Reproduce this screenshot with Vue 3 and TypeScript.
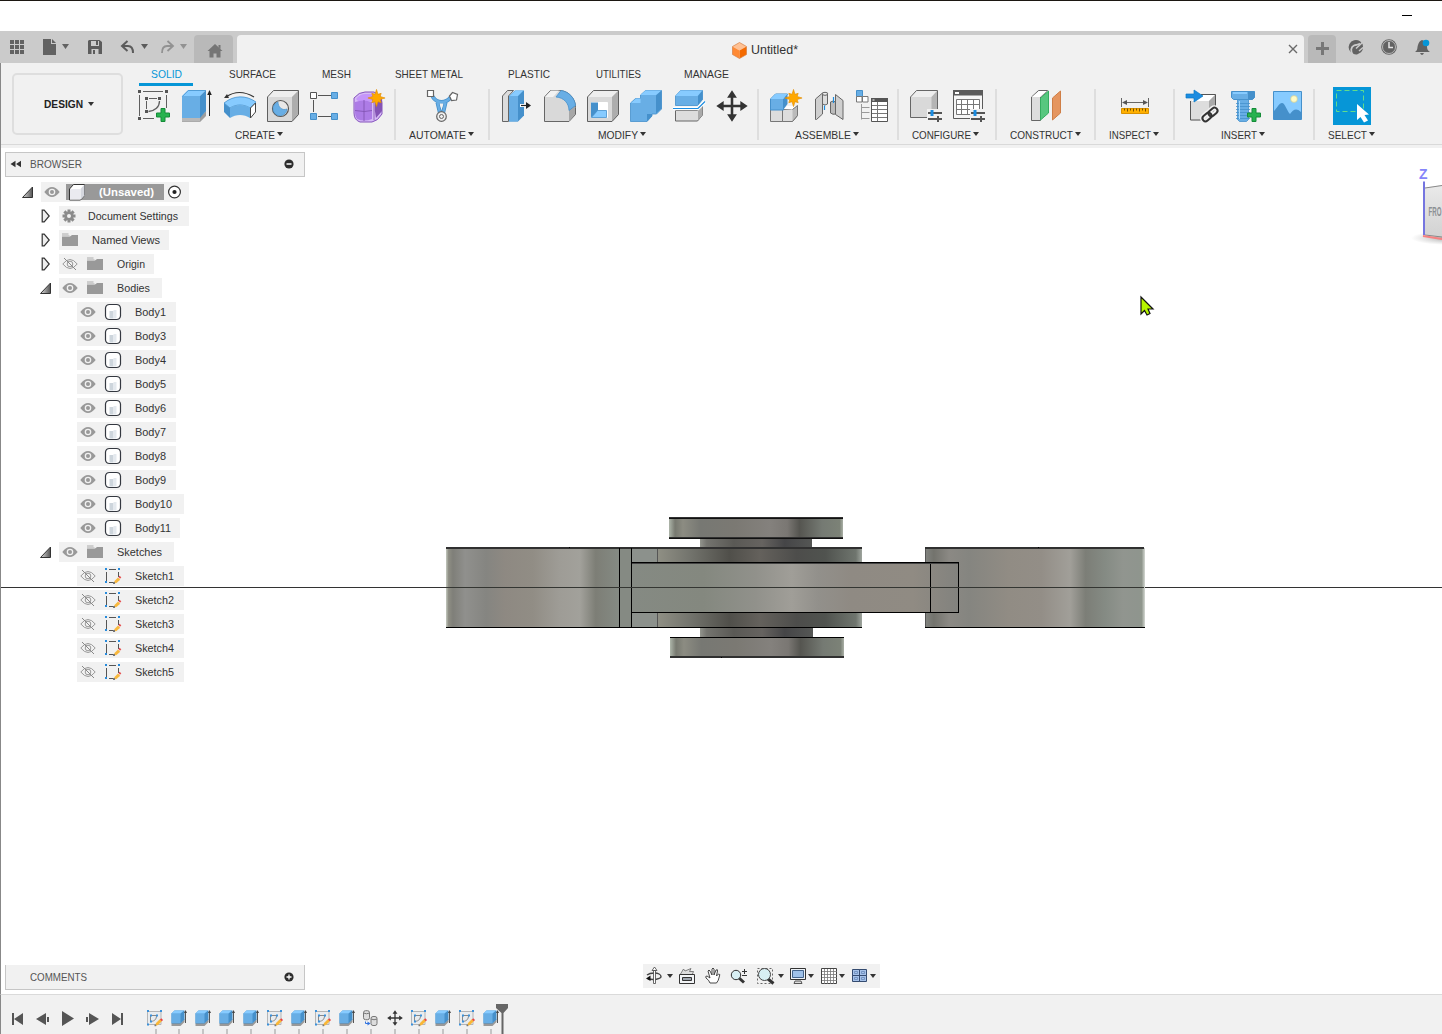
<script setup lang="ts">
import type { Directive } from 'vue'

/* Condenses or widens a label horizontally so it takes exactly the given width. */
const vFit: Directive<HTMLElement, number> = {
  mounted(el, { value }) {
    const natural = el.getBoundingClientRect().width
    el.style.width = `${value}px`
    el.style.transform = `scaleX(${value / natural})`
  },
}

interface Icon { x: number; w: number; art: string }
/* w: group width, tw: label width, lx: label indent, pad: icon row indent */
interface Group { label: string; w: number; tw: number; lx: number; pad: number; icons: Icon[] }

const G = '#5f5f5f'
const star = (x: number, y: number) => {
  let d = ''
  for (let i = 0; i < 16; i++) {
    const r = i % 2 ? 4 : i % 4 ? 6.6 : 8.6
    const a = (i * Math.PI) / 8
    d += `${i ? 'L' : 'M'}${(x + r * Math.sin(a)).toFixed(1)} ${(y - r * Math.cos(a)).toFixed(1)}`
  }
  return `<path d="${d}Z" fill="#ffa800" stroke="#e08c00" stroke-width=".6"/>`
}
const plus = (x: number, y: number) =>
  `<path d="M${x - 2} ${y - 6.5}h4v4.5h4.5v4h-4.5v4.5h-4v-4.5h-4.500v-4h4.500z" fill="#27b24e" stroke="#158c38" stroke-width="1"/>`
const sliders = (x: number, y: number) =>
  `<path d="M${x - 1} ${y - 4}h15v14h-15z" fill="#f1f1f1"/><path d="M${x} ${y}h14M${x} ${y + 6}h14" stroke="#555" stroke-width="2"/><path d="M${x + 10} ${y + 3}v6" stroke="#555" stroke-width="2"/><path d="M${x + 4} ${y - 3}v6" stroke="#1b8ce0" stroke-width="3"/>`
const moveCross = (x: number, y: number, s: number) =>
  `<g transform="translate(${x} ${y}) scale(${s})" fill="#333"><path d="M-1.3-10h2.600v20h-2.600zM-10-1.300h20v2.600h-20z"/><path d="M0-16l5 7.500H-5zM0 16l5-7.500H-5zM-16 0l7.500-5V5zM16 0l-7.500-5V5z"/></g>`

const groups: Group[] = [
  {
    label: 'CREATE', w: 272, tw: 40, lx: 112, pad: 7,
    icons: [
      { x: 130, w: 43, art: `<g fill="none" stroke="${G}"><path d="M143 91.500h20M139.500 95v21M166.500 95v13M143 118.500h11M146.500 101v8M149 98.500h8"/><path d="M159.500 101c0 6-4.500 10-11 10.500" stroke-width="1.300"/></g><path d="M138 90h3v3h-3zM165 90h3v3h-3zM138 117h3v3h-3zM145 97h3v3h-3zM158 97h3v3h-3zM145 110h3v3h-3z" fill="#555"/>${plus(163, 115)}` },
      { x: 173, w: 43, art: `<path d="M182 117h18l6-6v5l-6 6h-18z" fill="#9d9d9d"/><path d="M182 117h18v4.500h-18z" fill="#b8b8b8"/><path d="M182 96l6-6h18l-6 6z" fill="#87cbff"/><path d="M182 96h18v22h-18z" fill="#68aee5"/><path d="M200 96l6-6v21l-6 7z" fill="#4590cb"/><path d="M182.500 96.300l5.800-5.800h17.200v21" fill="none" stroke="#4590cb" stroke-width=".8"/><path d="M209.500 116V94" stroke="#222"/><path d="M209.500 90l2.300 5h-4.600z" fill="#222"/>` },
      { x: 216, w: 43, art: `<path d="M226 97q13-9 28 0" fill="none" stroke="#333" stroke-width="1.200"/><path d="M224 98l3-4 2 4z" fill="#333"/><path d="M224 103c10-8 22-8 32-1l-6 6c-6-4-14-4-20 0z" fill="#87cbff" stroke="#4590cb" stroke-width=".8"/><path d="M230 108c6-4 14-4 20 0v10c-6-4-14-4-20 0z" fill="#68aee5"/><path d="M224 103l6 5v10l-6-6z" fill="#4590cb"/><path d="M250.500 108l5-5v9l-5 6z" fill="#fff" stroke="#444"/>` },
      { x: 259, w: 43, art: `<path d="M267.500 97l6-6.500h25v24l-6.500 7h-24.500z" fill="#d9d9d9"/><path d="M267.500 97l6-6.500h25l-6.500 6.500z" fill="#eee"/><path d="M292 97l6.500-6.500v24l-6.500 7z" fill="#adadad"/><path d="M267.500 97l6-6.500h25v24l-6.500 7h-24.500z" fill="none" stroke="${G}" stroke-linejoin="round"/><circle cx="280.500" cy="108.500" r="8" fill="#e8e8e8" stroke="#555" stroke-width="1.200"/><path d="M278 102a7 7 0 1 0 9 7c-5 2-9-2-9-7z" fill="#68aee5" stroke="#4590cb" stroke-width=".7"/>` },
      { x: 302, w: 43, art: `<path d="M318 95.500h13M313.500 100v12M318 116.500h13" stroke="#555" fill="none"/><path d="M310.500 92.500h6v6h-6z" fill="#fff" stroke="#555"/><path d="M331.500 92.500h6v6h-6zM310.500 113.500h6v6h-6zM331.500 113.500h6v6h-6z" fill="#68aee5" stroke="#4590cb"/>` },
      { x: 345, w: 45, art: `<path d="M354 98q5-6 11-6h9q8 4 8 11v11q-4 7-10 8h-12q-6-2-6-9z" fill="#d6bbf6" stroke="#8552bd"/><path d="M356 99q4-5 9-5h7l2 7h-16z" fill="#c596fa"/><path d="M355 102q8-3 17 0v17q-8 3-15 0-2-3-2-6z" fill="#ad7ce6"/><path d="M375 103l7-4v12l-6 7q-2-8-1-15z" fill="#8454b5"/><path d="M364 100v21M355 110.500q10 2 17 0M374 102v18" stroke="#7e50af" stroke-width=".8" fill="none"/>${star(376.500, 98)}` },
    ],
  },
  {
    label: 'AUTOMATE', w: 94, tw: 57, lx: 14, pad: 25,
    icons: [
      { x: 420, w: 44, art: `<path d="M432.500 96.500q3.500 5.500 9 5.500t9-4.500M437.500 102.500l2.500 10.500M445.500 102.500l-2.500 10.500" fill="none" stroke="#4590cb" stroke-width="4"/><path d="M432.500 96.500q3.500 5.500 9 5.500t9-4.500M437.500 102.500l2.500 10.500M445.500 102.500l-2.500 10.500" fill="none" stroke="#68aee5" stroke-width="2.400"/><path d="M439.500 103.500h4l-2 6z" fill="#f1f1f1"/><circle cx="441.500" cy="116.500" r="4.800" fill="#eee" stroke="#666" stroke-width="1.200"/><circle cx="441.500" cy="116.500" r="2" fill="none" stroke="#666"/><path d="M427.500 90.500h6v6h-6zM449.500 96l3-3.500 5 2-1 5.500-5 .5z" fill="#fff" stroke="#666" stroke-width="1.200"/>` },
    ],
  },
  {
    label: 'MODIFY', w: 269, tw: 40, lx: 109, pad: 6,
    icons: [
      { x: 495, w: 43, art: `<path d="M502.500 96l5-5.500h6l-5 5.500v25.500h-6z" fill="#ddd" stroke="#666"/><path d="M509 96l6-5.500h9v25l-6 6h-9z" fill="#4590cb"/><path d="M509 96h9v25.500h-9z" fill="#68aee5"/><path d="M509.500 96l6-5.500h8l-5.500 5.500z" fill="#87cbff"/><path d="M520 105.500h9" stroke="#fff" stroke-width="3"/><path d="M521 105.500h6" stroke="#222" stroke-width="1.200"/><path d="M526 102l5 3.500-5 3.500z" fill="#222"/>` },
      { x: 538, w: 43, art: `<path d="M544.500 97l6-6.500h9c8 0 16 7 16 17v7l-6.500 7h-24.500z" fill="#d9d9d9" stroke="#666"/><path d="M545 97l6-6.500h8l-6 6.500z" fill="#f2f2f2"/><path d="M569 109l6-5v10.500l-6 6.500z" fill="#a7a7a7"/><path d="M556 97l5-6.500c8 1 14 8 14.500 15l-6.500 5c0-7-5-13-13-13.500z" fill="#68aee5" stroke="#4590cb" stroke-width=".8"/>` },
      { x: 581, w: 43, art: `<path d="M587.500 97l6-6.500h25v24l-6.500 7h-24.500z" fill="#d9d9d9"/><path d="M587.500 97l6-6.500h25l-6.500 6.500z" fill="#eee"/><path d="M612 97l6.500-6.500v24l-6.500 7z" fill="#adadad"/><path d="M587.500 97l6-6.500h25v24l-6.500 7h-24.500z" fill="none" stroke="${G}" stroke-linejoin="round"/><path d="M591.500 102.500h16v15h-16z" fill="#fff" stroke="#fff"/><path d="M591 102.500h7v9l-7 6z" fill="#4590cb"/><path d="M591.500 117.500l6-7h9v7z" fill="#87cbff" stroke="#4590cb" stroke-width=".8"/>` },
      { x: 624, w: 43, art: `<path d="M630.500 103l5-4.500h5V95l5-4.500h16v18.500l-5 5h-4.500v2l-5 5.500h-16.500z" fill="#68aee5" stroke="#4590cb" stroke-width=".8"/><path d="M640.500 95l5-4.500h16l-5.500 4.500zM631 103l5-4.500h4.500v4.500z" fill="#87cbff"/><path d="M656 95.500l5.500-5v18l-5.500 5zM647 114h5v2l-5 5.500z" fill="#4590cb"/>` },
      { x: 667, w: 43, art: `<path d="M675.500 110.500h22l5-4.500v9l-5 6h-22z" fill="#ddd" stroke="#666"/><path d="M698 110l4.500-4v9l-4.500 5.500z" fill="#aaa"/><path d="M675.500 96l5-5.500h22v9l-5 6h-22z" fill="#68aee5" stroke="#4590cb" stroke-width=".8"/><path d="M675.500 96l5-5.500h22l-5 5.500z" fill="#87cbff"/><path d="M698 96l4.500-5.500v9l-4.500 5.500z" fill="#4590cb"/><path d="M673 108.500h25l7-7" fill="none" stroke="#fff" stroke-width="3.500"/><path d="M673 108.500h25l7-7" fill="none" stroke="#1b8ce0" stroke-width="1.200"/>` },
      { x: 710, w: 43, art: moveCross(732, 106, 0.98) },
    ],
  },
  {
    label: 'ASSEMBLE', w: 140, tw: 56, lx: 37, pad: 5,
    icons: [
      { x: 763, w: 43, art: `<path d="M770.500 109.500h12v12h-12zM782.500 109.500h9l6-3v9l-5 6h-10z" fill="#ddd" stroke="#777"/><path d="M783 109l4-3h10.500l-5 3.500z" fill="#fff"/><path d="M792.500 109.500l5-4v10l-5 6" fill="#bbb" stroke="#777"/><path d="M770.500 99l5-5h12l-4 5v11h-13z" fill="#68aee5" stroke="#4590cb"/><path d="M770.500 99l5-5h12l-4 5z" fill="#87cbff"/><path d="M783.500 99l4-5v10l-4 5.500z" fill="#4590cb"/>${star(793.500, 98)}` },
      { x: 806, w: 43, art: `<path d="M815.500 99l7-6h5l-5 5v16l-6 5.500h-1z" fill="#cfcfcf" stroke="#666"/><path d="M822.500 94v10q2.500 2 5 0V94z" fill="#dedede" stroke="#666"/><ellipse cx="825" cy="93.800" rx="2.600" ry="1.500" fill="#eee" stroke="#666"/><path d="M835.500 94.500l7.500 6v19l-7.500-5z" fill="#cfcfcf" stroke="#666"/><path d="M830.500 102v11q2.500 2 5 1v-12q-2-2-5 0z" fill="#bbb" stroke="#666"/><path d="M824.500 105.500v4.500M833.500 97v6" stroke="#1b8ce0" stroke-width="1.200"/>` },
      { x: 849, w: 45, art: `<path d="M856.500 90.500h6v6h-6z" fill="#68aee5" stroke="#4590cb"/><path d="M856.500 96.500h5.500v5.500h-5.500zM862.500 96.500h5.500v5.500h-5.500z" fill="#fff" stroke="#777"/><path d="M861.500 104v15.500M861.500 107.500h8M861.500 112.500h8M861.500 118.500h8" stroke="#999" fill="none"/><path d="M871.500 98.500h16v23h-16z" fill="#fff" stroke="#555"/><path d="M871 98h17v4h-17z" fill="#555"/><path d="M872.500 100h2" stroke="#fff"/><path d="M872 105.500h15M872 109.500h15M872 113.500h15M872 117.500h15M877.500 102v19" stroke="#777"/>` },
    ],
  },
  {
    label: 'CONFIGURE', w: 98, tw: 59, lx: 14, pad: 6,
    icons: [
      { x: 904, w: 43, art: `<path d="M910.500 97l6-6.500h21v20l-6 7h-21z" fill="#d9d9d9"/><path d="M910.500 97l6-6.500h21l-6 6.500z" fill="#eee"/><path d="M931.500 97l6-6.500v20l-6 7z" fill="#b5b5b5"/><path d="M910.500 97l6-6.500h21v27h-27z" fill="none" stroke="#666"/>${sliders(928, 113)}` },
      { x: 947, w: 43, art: `<path d="M953.500 91.500h29v27h-29z" fill="#f6f6f6" stroke="#5b5b5b"/><path d="M953 90h30v5.500h-30z" fill="#5b5b5b"/><path d="M955 93h4" stroke="#fff" stroke-width="2"/><path d="M956.500 99.500h23v15h-23zM956.500 104.500h23M956.500 109.500h23M961.500 99.500v15M967.500 99.500v15M973.500 99.500v15" fill="#fff" stroke="#777"/>${sliders(971, 113)}` },
    ],
  },
  {
    label: 'CONSTRUCT', w: 99, tw: 63, lx: 14, pad: 28,
    icons: [
      { x: 1024, w: 43, art: `<path d="M1031.500 97l7-6.500h9l-7 6.500v23.500h-9z" fill="#ddd" stroke="#666"/><path d="M1032 97l7-6h8l-7 6z" fill="#fff"/><path d="M1040.500 98l8-7v22l-8 7z" fill="#57c77f" stroke="#35ad60"/><path d="M1052.500 98l8-7v22l-8 7z" fill="#e5955f" stroke="#cf7e46"/>` },
    ],
  },
  {
    label: 'INSPECT', w: 79, tw: 42, lx: 14, pad: 18,
    icons: [
      { x: 1113, w: 43, art: `<path d="M1121.500 98v9M1148.500 98v9M1123 102.500h24" stroke="#666"/><path d="M1122 102.500l5-2.500v5zM1148 102.500l-5-2.500v5z" fill="#555"/><path d="M1121.500 108.500h27v5h-27z" fill="#ffb000" stroke="#d99100"/><path d="M1124.500 108.500v2M1127.500 108.500v3M1130.500 108.500v2M1133.500 108.500v3M1136.500 108.500v2M1139.500 108.500v3M1142.500 108.500v2M1145.500 108.500v3" stroke="#775100"/>` },
    ],
  },
  {
    label: 'INSERT', w: 140, tw: 36, lx: 47, pad: 6,
    icons: [
      { x: 1180, w: 43, art: `<path d="M1190.500 101l7-6.500h18l-6 6.500v19.500h-19z" fill="#ddd"/><path d="M1191 101l8-6.500h16.500l-6.500 6.500z" fill="#fff"/><path d="M1209 101l7-7v14l-7 11z" fill="#aaa"/><path d="M1190.500 101v19h14M1201 94.500h14.500v14" fill="none" stroke="#555"/><path d="M1186 94h8v-4l9 6-9 6v-4h-8z" fill="#1b8ce0" stroke="#0878c4" stroke-width=".7"/><g fill="none" stroke="#f1f1f1" stroke-width="5"><rect x="1202" y="114" width="10" height="6" rx="3" transform="rotate(-42 1207 117)"/><rect x="1208" y="109" width="10" height="6" rx="3" transform="rotate(-42 1213 112)"/></g><g fill="none" stroke="#333" stroke-width="2"><rect x="1202" y="114" width="10" height="6" rx="3" transform="rotate(-42 1207 117)"/><rect x="1208" y="109" width="10" height="6" rx="3" transform="rotate(-42 1213 112)"/></g>` },
      { x: 1223, w: 43, art: `<path d="M1231.500 91.500h23v6l-2 2h-19l-2-2z" fill="#68aee5" stroke="#4590cb"/><path d="M1248 91.500h6.500v6l-2 2h-4.500z" fill="#4590cb"/><path d="M1233 92h14v2h-14z" fill="#87cbff"/><path d="M1237.500 99.500h11v20l-2 2h-7l-2-2z" fill="#68aee5" stroke="#4590cb" stroke-width=".8"/><path d="M1236 103.500h14M1236 106.500h14M1236 109.500h14M1236 112.500h14M1236 115.500h14M1236 118.500h14" stroke="#4590cb" stroke-width=".8"/><path d="M1239.500 101v18" stroke="#a9dcff"/>${plus(1254, 115)}` },
      { x: 1266, w: 43, art: `<path d="M1273.500 91.500h28v28h-28z" fill="#87cbff" stroke="#4590cb"/><path d="M1274 111c4-4 5-8 8-8s5 8 8 11c3-4 6-7 11-2v7.500h-27z" fill="#4590cb"/><circle cx="1294" cy="99" r="3.400" fill="#fffac4" stroke="#c3c899" stroke-width=".7"/>` },
    ],
  },
  {
    label: 'SELECT', w: 75, tw: 39, lx: 14, pad: 19,
    icons: [
      { x: 1333, w: 38, art: `<path d="M1333 87h38v38h-38z" fill="#0696d7"/><path d="M1336.500 90.500h27v21h-27z" fill="none" stroke="#61dc8b" stroke-dasharray="5 3"/><path d="M1357 104v16l3.500-3 3.500 5.500 4-2-3.500-5.500 4.500-.5z" fill="#fff"/>` },
    ],
  },
]

const tabs = [
  { t: 'SOLID', x: 151, w: 31 }, { t: 'SURFACE', x: 229, w: 47 }, { t: 'MESH', x: 321.5, w: 29 },
  { t: 'SHEET METAL', x: 395, w: 68 }, { t: 'PLASTIC', x: 508, w: 42 }, { t: 'UTILITIES', x: 595.5, w: 45 },
  { t: 'MANAGE', x: 684, w: 45 },
].map((t, i, all) => ({ ...t, gap: i ? t.x - all[i - 1].x - all[i - 1].w : 28 }))

interface Row { label: string; depth: number; open?: boolean; leaf?: boolean; eye?: 'on' | 'off'; icon: string; w: number; tx: number; tw: number }
const body = (n: number): Row => ({ label: `Body${n}`, depth: 2, leaf: true, eye: 'on', icon: 'body', w: n === 11 ? 103 : n > 9 ? 107 : 99, tx: 58, tw: n === 11 ? 36 : n > 9 ? 37 : 31 })
const rows: Row[] = [
  { label: '(Unsaved)', depth: 0, open: true, eye: 'on', icon: 'root', w: 148, tx: 58, tw: 55 },
  { label: 'Document Settings', depth: 1, icon: 'gear', w: 130, tx: 29, tw: 90 },
  { label: 'Named Views', depth: 1, icon: 'folder', w: 110, tx: 33, tw: 68 },
  { label: 'Origin', depth: 1, eye: 'off', icon: 'folder', w: 95, tx: 58, tw: 28 },
  { label: 'Bodies', depth: 1, open: true, eye: 'on', icon: 'folder', w: 103, tx: 58, tw: 33 },
  ...[1, 3, 4, 5, 6, 7, 8, 9, 10, 11].map(body),
  { label: 'Sketches', depth: 1, open: true, eye: 'on', icon: 'folder', w: 115, tx: 58, tw: 45 },
  ...[1, 2, 3, 4, 5].map((n): Row => ({ label: `Sketch${n}`, depth: 2, leaf: true, eye: 'off', icon: 'sketch', w: 107, tx: 58, tw: 39 })),
]
const steps = ['s', 'e', 'e', 'e', 'e', 's', 'e', 's', 'e', 'c', 'm', 's', 'e', 's', 'e']
const stepArt: Record<string, string> = {
  s: `<path d="M.5 1.500h13.500v13h-13.500z" fill="#e9ecef" stroke="#b5b5b5"/><path d="M3.500 11V5.500h6c0 4-2 5.500-5.500 6" fill="none" stroke="#888"/><path d="M0 0h2v2h-2zM13 0h2v2h-2zM0 13.500h2v2h-2zM3 4.500h2v2h-2zM9 4.500h2v2h-2zM3 10.500h2v2h-2z" fill="#3b91db"/><path d="M8 16l1-3 4-4 2 2-4 4z" fill="#f9b738"/><path d="M13 9.500l1.200-1.300 1.800 1.800-1.200 1.300z" fill="#eb4141"/><path d="M7.500 14.500h1.700v1.700h-1.700z" fill="#777"/>`,
  e: `<path d="M.5 13h9l4-4v3l-4 4h-9z" fill="#999"/><path d="M.5 3.500l3-3h10v9l-4 4h-9z" fill="#4590cb"/><path d="M.5 3.500h9v9.500h-9z" fill="#68aee5"/><path d="M.5 3.500l3-3h9.500l-3.500 3z" fill="#87cbff"/><path d="M14.500 13V2" stroke="#555"/><path d="M14.500 0l1.500 3h-3z" fill="#444"/>`,
  c: `<g fill="#ddd" stroke="#777"><rect x=".5" y=".7" width="6" height="9" rx="2"/><rect x="8" y="6.500" width="6" height="9" rx="2"/><path d="M.5 3q3 1.500 6 0M8 9q3 1.500 6 0" fill="none"/></g><path d="M2.500 11.500v2h3" fill="none" stroke="#3173df"/><path d="M4.500 11.500l3 2-3 2z" fill="#3173df"/>`,
  m: moveCross(8, 8, 0.49),
}
</script>

<template>
  <div class="app">
    <header class="titlebar"><i class="minimize"></i></header>

    <nav class="tabbar">
      <svg class="quick" width="193" height="32" viewBox="1 31 193 32">
        <path d="M10 40h4v4h-4zM15 40h4v4h-4zM20 40h4v4h-4zM10 45h4v4h-4zM15 45h4v4h-4zM20 45h4v4h-4zM10 50h4v4h-4zM15 50h4v4h-4zM20 50h4v4h-4z" fill="#626262" />
        <path d="M43 39h8v5h5v11h-13zM52 39l4 4h-4zM62 44h7l-3.500 5z" fill="#626262" />
        <path d="M89 40h10.500l2.500 2v12h-14V41z" fill="#5c5c5c" /><path d="M91 41h8v5h-8zM91.500 49h7v5h-7z" fill="#cbcbcb" /><path d="M96 41h2v4h-2zM93 50h2v4h-2z" fill="#5c5c5c" />
        <path d="M123 46h5q5 0 5 7" fill="none" stroke="#5c5c5c" stroke-width="2" /><path d="M127.500 41l-5.500 5 5.500 5" fill="none" stroke="#5c5c5c" stroke-width="2" /><path d="M141 44h7l-3.500 5z" fill="#5c5c5c" />
        <path d="M172 46h-5q-5 0-5 7" fill="none" stroke="#929292" stroke-width="1.800" /><path d="M167.500 41l5.500 5-5.500 5" fill="none" stroke="#929292" stroke-width="1.800" /><path d="M180 44h7l-3.500 5z" fill="#929292" />
      </svg>
      <div class="home"><svg width="16" height="14" viewBox="207 44 16 14"><path d="M215 44l7.500 7h-2v6.500h-4v-4h-3v4h-4V51h-2zM218.500 45h2v4l-2-2z" fill="#757575" /></svg></div>
      <div class="doc">
        <svg width="15" height="17" viewBox="0 0 15 17"><path d="M7.500.5l7 4-7 4-7-4z" fill="#ffc194" /><path d="M.5 4.500l7 4v8l-7-4z" fill="#ff8a35" /><path d="M14.500 4.500l-7 4v8l7-4z" fill="#f46a00" /><path d="M7.500.5l7 4v8l-7 4-7-4v-8z" fill="none" stroke="#d78043" stroke-width=".7" /></svg>
        <span v-fit="47">Untitled*</span>
        <svg class="close" width="10" height="10" viewBox="0 0 10 10"><path d="M1 1l8 8M9 1L1 9" stroke="#6a6a6a" stroke-width="1.400" /></svg>
      </div>
      <div class="add"><i></i></div>
      <svg class="status" width="106" height="32" viewBox="1336 31 106 32">
        <path d="M1353.500 54a7.200 7.200 0 1 1 7.500-1.800l-4 2.200a7.500 7.500 0 0 1-3.500-.4z" fill="#626262" /><path d="M1353 55c-3-4-2-8 1-9.500 2-1 4-.5 6-2" fill="none" stroke="#cbcbcb" stroke-width="1.800" /><path d="M1356 48.500l6.500-6M1359 51l4-3.500" fill="none" stroke="#cbcbcb" stroke-width="1.500" />
        <circle cx="1389" cy="47" r="7.800" fill="#626262" /><circle cx="1389" cy="47" r="6.500" fill="none" stroke="#cbcbcb" stroke-width=".8" /><path d="M1389 42v5.500h4" fill="none" stroke="#e4e4e4" stroke-width="1.500" />
        <path d="M1415 52c3-2 2-4 3-7q1-4 4-5 4 1 5 5c0 3 0 5 3 7zM1420 53h4q-2 4-4 0z" fill="#626262" /><circle cx="1426" cy="43" r="3.300" fill="#0696d7" />
      </svg>
    </nav>

    <section class="ribbon">
      <button class="workspace"><b v-fit="39">DESIGN</b><i class="caret"></i></button>
      <div class="ribbon-main">
        <div class="tabs">
          <div v-for="(t, i) in tabs" :key="t.t" class="tab" :class="{ active: !i }" :style="{ marginLeft: t.gap + 'px' }"><span v-fit="t.w">{{ t.t }}</span></div>
        </div>
        <div class="groups">
          <div v-for="g in groups" :key="g.label" class="group" :style="{ width: g.w + 'px' }">
            <div class="icons" :style="{ paddingLeft: g.pad + 'px' }"><svg v-for="ic in g.icons" :key="ic.x" :width="ic.w" height="41" :viewBox="`${ic.x} 85 ${ic.w} 41`" v-html="ic.art"></svg></div>
            <div class="group-label" :style="{ paddingLeft: g.lx + 'px' }"><span v-fit="g.tw">{{ g.label }}</span><i class="caret"></i></div>
          </div>
        </div>
      </div>
    </section>

    <main class="canvas">
      <svg class="scene" width="1441" height="846" viewBox="1 148 1441 846">
        <defs>
          <linearGradient id="left"><stop offset="0" stop-color="#c4c9bf" /><stop offset=".015" stop-color="#8e8e84" /><stop offset=".04" stop-color="#7f7f79" /><stop offset=".11" stop-color="#90908d" /><stop offset=".23" stop-color="#858581" /><stop offset=".34" stop-color="#8e8982" /><stop offset=".5" stop-color="#918d85" /><stop offset=".65" stop-color="#9e9c96" /><stop offset=".77" stop-color="#a2a19b" /><stop offset=".86" stop-color="#7d7e76" /><stop offset="1" stop-color="#858b84" /></linearGradient>
          <linearGradient id="right"><stop offset="0" stop-color="#828480" /><stop offset=".04" stop-color="#73736d" /><stop offset=".11" stop-color="#8b8984" /><stop offset=".2" stop-color="#858580" /><stop offset=".38" stop-color="#918c84" /><stop offset=".53" stop-color="#938e87" /><stop offset=".66" stop-color="#a19f99" /><stop offset=".73" stop-color="#7c7e77" /><stop offset=".82" stop-color="#858b84" /><stop offset=".9" stop-color="#91958f" /><stop offset=".97" stop-color="#8f958e" /><stop offset=".985" stop-color="#8f968c" /><stop offset="1" stop-color="#d5d9d3" /></linearGradient>
          <linearGradient id="plate"><stop offset="0" stop-color="#858a83" /><stop offset=".22" stop-color="#84887f" /><stop offset=".38" stop-color="#91918b" /><stop offset=".49" stop-color="#a09e98" /><stop offset=".57" stop-color="#92908b" /><stop offset=".67" stop-color="#8f8a83" /><stop offset=".86" stop-color="#908b83" /><stop offset="1" stop-color="#82827e" /></linearGradient>
          <linearGradient id="cap"><stop offset="0" stop-color="#aeb6aa" /><stop offset=".035" stop-color="#777970" /><stop offset=".08" stop-color="#8c8c82" /><stop offset=".18" stop-color="#777873" /><stop offset=".38" stop-color="#7b7973" /><stop offset=".58" stop-color="#84817d" /><stop offset=".68" stop-color="#7a7773" /><stop offset=".75" stop-color="#555550" /><stop offset=".88" stop-color="#757a73" /><stop offset=".98" stop-color="#7c8277" /><stop offset="1" stop-color="#aab0a6" /></linearGradient>
          <linearGradient id="hub"><stop offset="0" stop-color="#92948d" /><stop offset=".06" stop-color="#74746f" /><stop offset=".3" stop-color="#5a5955" /><stop offset=".55" stop-color="#666360" /><stop offset=".75" stop-color="#454547" /><stop offset="1" stop-color="#555755" /></linearGradient>
          <linearGradient id="disc"><stop offset="0" stop-color="#8f8f84" /><stop offset=".15" stop-color="#74756e" /><stop offset=".35" stop-color="#504f4a" /><stop offset=".5" stop-color="#64615c" /><stop offset=".68" stop-color="#4d4d4b" /><stop offset=".82" stop-color="#50534f" /><stop offset=".97" stop-color="#6f756e" /><stop offset="1" stop-color="#9fa59e" /></linearGradient>
          <linearGradient id="face" x1="0" y1="0" x2="0" y2="1"><stop offset="0" stop-color="#eaeaea" /><stop offset="1" stop-color="#d2d2d2" /></linearGradient>
          <radialGradient id="shade"><stop offset="0" stop-color="#777" stop-opacity=".65" /><stop offset="1" stop-color="#999" stop-opacity="0" /></radialGradient>
        </defs>
        <path d="M1 587.500H446M1144 587.500h298" stroke="#333" />
        <path d="M669 518h174v20H669z" fill="url(#cap)" /><path d="M700 539h112v9H700zM700 628h113v9H700z" fill="url(#hub)" />
        <path d="M670 638h174v19H670z" fill="url(#cap)" />
        <path d="M446 548h174v79H446z" fill="url(#left)" /><path d="M619 548h12v79h-12z" fill="#858a83" /><path d="M631 548h27v79h-27z" fill="#8c918c" />
        <path d="M658 548h204v79H658z" fill="url(#disc)" /><path d="M925 548h220v79H925z" fill="url(#right)" />
        <path d="M631 562h328v51H631z" fill="url(#plate)" />
        <path d="M669 518h174M669 538h174M446 548h416M925 548h219M670 657h174" stroke="#303030" stroke-width="2" />
        <path d="M669 518.500h174M669 538.500h174" stroke="#111" />
        <path d="M446 627.500h416M925 627.500h220M670 637.500h174M619.500 548v79M631.500 548v79M631 562.500h328M631 612.500h328M930.500 562v50M958.500 562v50" fill="none" stroke="#000" />
        <path d="M632 563.500h326" stroke="#444" /><path d="M657.500 549v13M657.500 613v14M925.500 549v13M925.500 613v14" stroke="#555" />
        <path d="M446 587.500h698" stroke="#343632" /><path d="M569 547.500h1M1038 547.500h1M721 657.500h1" stroke="#000" />

        <ellipse cx="1448" cy="238" rx="37" ry="7" fill="url(#shade)" />
        <path d="M1424 188l18-3v52l-18-2z" fill="url(#face)" /><path d="M1425 188l17-2.500M1425 235l17 2" stroke="#888" fill="none" />
        <path d="M1423 236l19 3" stroke="#f68181" stroke-width="2" /><path d="M1424 181.500V235" stroke="#7575e0" stroke-width="2" />
        <text x="1419" y="178.500" class="axis" textLength="8.500" lengthAdjust="spacingAndGlyphs">Z</text><text x="1428.500" y="216" class="front" textLength="13" lengthAdjust="spacingAndGlyphs">FRO</text>
        <path d="M1141 297v17l3.500-3.500 2.500 4.500 3-1.500-2-4.500h5z" fill="#b6f500" stroke="#111" stroke-width="1.200" />
      </svg>

      <aside class="browser">
        <div class="panel-head">
          <svg width="12" height="8" viewBox="0 0 12 8"><path d="M5.500.8v6.400L.5 4zM11 .8v6.400L6 4z" fill="#333" /></svg>
          <span v-fit="52">BROWSER</span>
          <svg class="toggle" width="10" height="10" viewBox="0 0 10 10"><circle cx="5" cy="5" r="4.600" fill="#2d2d2d" /><path d="M2.500 5h5" stroke="#fff" stroke-width="1.500" /></svg>
        </div>
        <div class="tree">
          <div v-for="r in rows" :key="r.label" class="row" :style="{ paddingLeft: r.depth * 18 + 'px' }">
            <svg class="twist" width="20" height="20" viewBox="0 0 20 20">
              <template v-if="!r.leaf">
                <defs><linearGradient id="tw"><stop offset="0" stop-color="#ddd" /><stop offset="1" stop-color="#555" /></linearGradient></defs>
                <path v-if="r.open" d="M1.500 15.500h10V5z" fill="url(#tw)" stroke="#333" />
                <path v-else d="M3.200 4.200v11.600h2l5-5.800-5-5.800z" fill="#eee" stroke="#333" stroke-width="1.200" />
              </template>
            </svg>
            <div class="chip" :style="{ width: r.w + 'px' }">
              <svg v-if="r.eye" class="eye" width="17" height="20" viewBox="0 0 17 20">
                <template v-if="r.eye === 'on'"><path d="M.3 10q7.700-10 15.400 0-7.700 10-15.400 0z" fill="#999" /><circle cx="8" cy="10" r="3.300" fill="#f1f1f1" /><circle cx="8" cy="10" r="2" fill="#999" /></template>
                <template v-else><path d="M.8 10q7.200-9 14.400 0-7.200 9-14.400 0z" fill="none" stroke="#999" /><circle cx="8" cy="10" r="2.800" fill="none" stroke="#999" /><path d="M2 4l12 12" stroke="#888" /></template>
              </svg>
              <svg class="kind" :width="r.icon === 'root' ? 98 : 20" height="20" :viewBox="`0 0 ${r.icon === 'root' ? 98 : 20} 20`">
                <template v-if="r.icon === 'root'"><path d="M0 2h98v16H0z" fill="#999" /><path d="M3.500 7l4-4.500h11v11l-4 4.500h-11z" fill="#fff" stroke="#333" stroke-linejoin="round" /><path d="M14.500 7l4-4.500v11l-4 4.500z" fill="#d5d7de" /><path d="M4 7h10v10.500H4z" fill="#eaeaf0" /></template>
                <template v-else-if="r.icon === 'gear'"><g fill="#8b8b8b"><path v-for="a in 4" :key="a" d="M8.500 3.500h3v13h-3z" :transform="`rotate(${a * 45} 10 10)`" /></g><circle cx="10" cy="10" r="4.600" fill="#8b8b8b" /><circle cx="10" cy="10" r="2" fill="#f1f1f1" /></template>
                <template v-else-if="r.icon === 'folder'"><path d="M3 6.500h8l2-1.500h6V16H3z" fill="#999" /><path d="M3 4h6.500" stroke="#aaa" /><path d="M3 5.500h7.500" stroke="#ccc" /></template>
                <template v-else-if="r.icon === 'body'"><path d="M3.500 6q.5-3.500 4-3.500h7q3.500 0 4 3.500v8q-.5 3.500-4 3.500h-7q-3.500 0-4-3.500z" fill="#fff" stroke="#343840" stroke-width="1.200" /><path d="M7.500 9h4v7.500h-4z" fill="#cdd5dc" /><path d="M11.500 8h3v8.500h-3z" fill="#e4e9ee" /></template>
                <template v-else><path d="M4.500 6v9M16.500 6v5M7 3.500h7M7 16.500h4" stroke="#555" fill="none" /><path d="M3 2h2v2H3zM16 2h2v2h-2zM3 15h2v2H3z" fill="#278bdc" /><path d="M11.500 17.500l1-2.500 3.500-3.500 2.200 2.200-3.700 3.300z" fill="#f8b83e" /><path d="M16.500 11l1-1.200 1.800 1.500-1.300 1.500z" fill="#e54848" /><path d="M11 16h2v2h-2z" fill="#777" /></template>
              </svg>
              <span class="name" :class="{ current: r.icon === 'root' }" :style="{ left: r.tx + 'px' }" v-fit="r.tw">{{ r.label }}</span>
              <svg v-if="r.icon === 'root'" class="radio" width="14" height="14" viewBox="0 0 14 14"><circle cx="6.500" cy="7" r="5.900" fill="#fff" stroke="#333" stroke-width="1.200" /><circle cx="6.500" cy="7" r="2.100" fill="#222" /></svg>
            </div>
          </div>
        </div>
      </aside>

      <div class="panel-head comments">
        <span v-fit="57">COMMENTS</span>
        <svg class="toggle" width="10" height="10" viewBox="0 0 10 10"><circle cx="5" cy="5" r="4.600" fill="#2d2d2d" /><path d="M2.500 5h5M5 2.500v5" stroke="#fff" stroke-width="1.300" /></svg>
      </div>

      <div class="viewbar">
        <svg width="237" height="24" viewBox="643 964 237 24">
          <path d="M648 978.500c5 2 13 .5 13-2 0-2-3-3.500-6.500-3.500q-5 0-7.500 2" fill="none" stroke="#444" stroke-width="1.400" /><path d="M653.500 970.500h2v13h-2z" fill="#fff" stroke="#444" stroke-width=".8" /><path d="M654.500 967l2.500 3.500h-5z" fill="#fff" stroke="#444" stroke-width=".8" /><path d="M646 978.500l4.500-3v5.500z" fill="#111" />
          <path d="M679.500 974.500h15v9h-15z" fill="#f2f4f6" stroke="#333" /><path d="M680.500 974l3-5 1.500 2 6-2.500-1.500 3h4l-1 2.500" fill="#ddd" stroke="#666" stroke-width=".8" /><path d="M682.500 977.500h9v3h-9z" fill="#9da4ad" stroke="#333" />
          <path d="M710 983q-1-3-4-5-1-2 1-2l3 2-2-7q1-2 2 0l2 4v-6q1-2 2 0v6l2-5q2-1 1.500 1l-1 5 2-2q2 0 1 2-1 5-3 7z" fill="#fff" stroke="#333" stroke-width=".9" />
          <path d="M739 978l5 4.500" stroke="#333" stroke-width="3" /><circle cx="736" cy="975" r="4.700" fill="#d8eff3" stroke="#333" /><path d="M742 971.500h5M744.500 969v5M742 975.500h5" stroke="#333" />
          <path d="M757.500 968.500h15v15h-15z" fill="none" stroke="#666" stroke-dasharray="2 2" /><path d="M768 979l5.500 4.500" stroke="#333" stroke-width="3" /><circle cx="764.500" cy="974.500" r="6" fill="#d8eff3" stroke="#444" />
          <path d="M790.500 968.500h15v11h-15z" fill="#eef3f8" stroke="#333" /><path d="M792.500 970.500h11v7h-11z" fill="#9fc1e9" stroke="#42638b" /><path d="M795 981h6l1 2.500h-8z" fill="#ddd" stroke="#555" />
          <path d="M821.500 968.500h15v15h-15z" fill="#fff" stroke="#444" /><path d="M824.500 969v15M827.500 969v15M830.500 969v15M833.500 969v15M822 971.500h15M822 974.500h15M822 977.500h15M822 980.500h15" stroke="#777" stroke-width=".8" />
          <path d="M852.500 969.500h7v6h-7zM859.500 969.500h7v6h-7zM852.500 975.500h7v6h-7zM859.500 975.500h7v6h-7z" fill="#a7c2e9" stroke="#344b70" /><path d="M854.500 971.500h3v2h-3zM861.500 971.500h3v2h-3zM854.500 977.500h3v2h-3zM861.500 977.500h3v2h-3z" fill="none" stroke="#6889b9" stroke-width=".8" />
          <path d="M667 974h6l-3 4zM778 974h6l-3 4zM808 974h6l-3 4zM839 974h6l-3 4zM870 974h6l-3 4z" fill="#333" />
        </svg>
      </div>
    </main>

    <footer class="timeline">
      <svg class="playback" width="142" height="39" viewBox="1 995 142 39"><path d="M12 1013h2v12h-2zM23 1013v12l-9-6zM46 1013v12l-10-6zM47 1017h2v5h-2zM62 1011l12 7.500-12 7.500zM86 1017h2v5h-2zM89 1013l10 6-10 6zM112 1013l9 6-9 6zM121 1013h2v12h-2z" fill="#555" /></svg>
      <div class="steps">
        <div v-for="(s, i) in steps" :key="i" class="step"><svg width="17" height="17" viewBox="0 0 17 17" v-html="stepArt[s]"></svg><i></i></div>
      </div>
      <svg class="marker" width="12" height="30" viewBox="0 0 12 30"><path d="M0 0h12v4l-4.500 5v21h-2V9L0 4z" fill="#666" /></svg>
    </footer>
  </div>
</template>

<style>
body { margin: 0; background: #fff; }
</style>

<style scoped>
.app { width: 1442px; height: 1034px; overflow: hidden; display: flex; flex-direction: column; font: 11px/14px "Liberation Sans", Arial, sans-serif; color: #333; background: #fff; box-sizing: border-box; }
svg { display: block; flex: none; }
span, b { display: inline-block; white-space: nowrap; transform-origin: 0 50%; flex: none; }
.caret { width: 0; height: 0; border: 3px solid transparent; border-top: 4px solid #333; border-bottom: 0; flex: none; }
.titlebar { height: 31px; border-top: 1px solid #1c1712; box-sizing: border-box; display: flex; justify-content: flex-end; padding: 14px 30px 0 0; }
.minimize { width: 10px; height: 1px; background: #000; }
.tabbar { height: 32px; background: #cbcbcb; display: flex; align-items: flex-end; flex: none; }
.quick { margin-left: 1px; }
.home { width: 39px; height: 28px; border-radius: 4px 4px 0 0; background: #b9b9b9; display: flex; justify-content: center; align-items: center; padding-top: 3px; box-sizing: border-box; }
.home svg { margin-left: 2px; }
.doc { width: 1067px; height: 28px; margin-left: 4px; border-radius: 4px 4px 0 0; background: #f1f1f1; display: flex; align-items: center; box-sizing: border-box; padding: 2px 0 0 495px; font-size: 12px; }
.doc span { margin-left: 4px; }
.doc .close { margin: 0 6px 2px auto; }
.add { width: 28px; height: 28px; margin-left: 4px; border-radius: 4px 4px 0 0; background: #b9b9b9; display: flex; align-items: center; justify-content: center; }
.add i { width: 13px; height: 13px; margin-bottom: 1px; background: linear-gradient(#777, #777) center / 3px 13px no-repeat, linear-gradient(#777, #777) center / 13px 3px no-repeat; }
.ribbon { height: 85px; box-sizing: border-box; border-left: 1px solid #888; background: linear-gradient(#d9d9d9, #d9d9d9) 0 81px / 100% 1px no-repeat #f1f1f1; display: flex; flex: none; }
.workspace { width: 111px; height: 62px; margin: 10px 0 0 11px; border: 2px solid #dedede; border-radius: 5px; background: #f1f1f1; display: flex; align-items: center; justify-content: center; gap: 5px; padding: 0 0 0 2px; color: #222; font: 11px/14px "Liberation Sans", Arial, sans-serif; box-sizing: border-box; }
.workspace b { font-weight: 700; }
.tabs { display: flex; height: 24px; }
.tab { padding-top: 4px; position: relative; }
.tab.active { color: #0696d7; }
.tab.active::after { content: ''; position: absolute; left: -12px; top: 20px; width: 54px; height: 3px; background: #0696d7; }
.groups { display: flex; height: 57px; }
.group { box-sizing: border-box; position: relative; flex: none; }
.group:not(:last-child)::after { content: ''; position: absolute; right: -1px; top: 2px; width: 2px; height: 51px; background: #dedede; }
.icons { display: flex; height: 41px; margin-top: -2px; }
.group-label { display: flex; align-items: center; gap: 2px; height: 14px; margin-top: 2px; }
.group-label .caret { margin-bottom: 2px; }
.canvas { height: 846px; border-left: 1px solid #888; box-sizing: border-box; position: relative; flex: none; background: #fff; }
.scene { position: absolute; left: 0; top: 0; }
.axis { font: bold 15px "Liberation Sans", sans-serif; fill: #8585fa; }
.front { font: bold 12px "Liberation Sans", sans-serif; fill: #8c9094; }
.browser { position: relative; padding: 4px 0 0 4px; width: 300px; }
.panel-head { width: 300px; height: 25px; box-sizing: border-box; border: 1px solid #c6c6c6; background: #f1f1f1; display: flex; align-items: center; padding: 0 10.5px 1px 4px; color: #555; }
.panel-head span { margin-left: 8px; }
.panel-head .toggle { margin-left: auto; }
.tree { padding: 5px 0 0 15px; }
.row { display: flex; height: 20px; margin-bottom: 4px; }
.twist { margin-left: 1px; }
.chip { height: 20px; background: #f1f1f1; position: relative; display: flex; }
.eye { margin-left: 3px; }
.kind { margin-left: 5px; }
.kind:first-child { margin-left: 0; }
.name { position: absolute; top: 3px; }
.name.current { color: #fff; font-weight: 700; }
.radio { position: absolute; right: 7px; top: 3px; }
.comments { position: absolute; left: 4px; bottom: 4px; border-top: 0; padding: 0 10.5px 0 16px; }
.viewbar { position: absolute; left: 642px; top: 816px; background: #f1f1f1; }
.timeline { height: 40px; box-sizing: border-box; border-left: 1px solid #888; border-top: 1px solid #dadada; background: #f1f1f1; display: flex; flex: none; }
.steps { display: flex; margin-left: 4px; }
.step { width: 24px; height: 39px; box-sizing: border-box; padding-top: 15px; display: flex; flex-direction: column; align-items: flex-start; }
.step i { width: 2px; height: 5px; margin: 2px 0 0 7px; background: #c5c5c5; }
.step:first-child i { margin-left: 8px; }
.marker { margin: 9px 0 0 -11px; }
</style>
